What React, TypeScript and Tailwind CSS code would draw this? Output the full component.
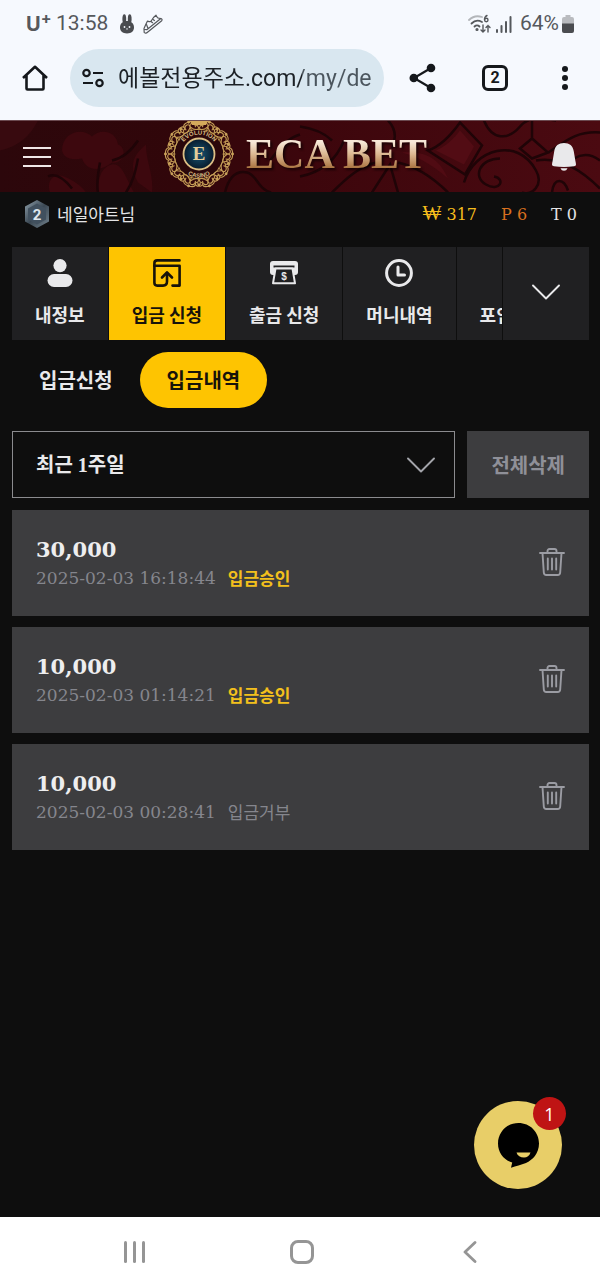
import { useState } from "react";
import type { ReactNode } from "react";

interface Deposit {
  id: number;
  amount: string;
  date: string;
  status: string;
  approved: boolean;
}

const deposits: Deposit[] = [
  { id: 1, amount: "30,000", date: "2025-02-03 16:18:44", status: "입금승인", approved: true },
  { id: 2, amount: "10,000", date: "2025-02-03 01:14:21", status: "입금승인", approved: true },
  { id: 3, amount: "10,000", date: "2025-02-03 00:28:41", status: "입금거부", approved: false },
];

function StatusBar() {
  return (
    <div className="flex h-12 items-center justify-between pl-[26px] pr-[26px] font-['Roboto',sans-serif] text-[21px] text-[#55585c]">
      <div className="flex items-center">
        <span className="flex w-[30px] items-start font-['Inter',sans-serif] text-xl leading-6 font-bold">
          U<sup className="top-0 text-base leading-3">+</sup>
        </span>
        <span>13:58</span>
        <svg className="ml-3 h-5 w-[14px]" viewBox="0 0 14 20" fill="#4a4c50">
          <ellipse cx="4.3" cy="5" rx="1.9" ry="4.8" />
          <ellipse cx="9.7" cy="5" rx="1.9" ry="4.8" />
          <path d="M7 7c4 0 7 2.4 7 6.3S11.500 19.500 7 19.500 0 17.200 0 13.300 3 7 7 7z" />
          <circle cx="4.500" cy="13" r="0.900" fill="#f6f9fe" />
          <circle cx="9.500" cy="13" r="0.900" fill="#f6f9fe" />
          <path d="M6 14.500h2L7 16z" fill="#f6f9fe" />
        </svg>
        <svg className="ml-[9px] h-5 w-5" viewBox="0 0 20 20" fill="none" stroke="#55585c" strokeWidth="1.200" strokeLinejoin="round" strokeLinecap="round">
          <path d="M1.200 18.500L1 14.500 3 10l1.500-3 1.500.6c1 .3 2-.2 2.500-1.100L10.500 3.500 13 1.200l1.500 2.500c1 .6 2.300.8 3.800 1 .9.400 1 1.300.4 2L4.500 18.300c-1 .9-2.800 1-3.300.2z" />
          <path d="M1.500 15.500l2.300.2L17.500 4.800M8 7.500l1.600 1.200M9.800 5.300l1.600 1.200M5 14.500l-1.500-4" />
        </svg>
      </div>
      <div className="flex items-center">
        <svg className="h-5 w-6" viewBox="0 0 24 20" fill="none" stroke="#55585c" strokeWidth="1.800" strokeLinecap="round">
          <path d="M1 6C5 2 9.500 1.500 14 3" stroke="#b3b6ba" />
          <path d="M3.500 9.500c3-3 7-3.500 10.500-1.500M6.500 12.500c1.500-1.500 3.500-1.500 5 0" />
          <circle cx="9" cy="15.500" r="0.700" fill="#55585c" />
          <path d="M19 1.500c-2 1-2.500 2.500-2.500 4" strokeWidth="1.400" />
          <circle cx="18.300" cy="6" r="1.700" strokeWidth="1.400" />
          <path d="M15 11v7m-2-2l2 2 2-2M20 18v-6.500m-2 2l2-2 2 2" strokeWidth="1.400" />
        </svg>
        <svg className="ml-1 h-[18px] w-4" viewBox="0 0 16 18" fill="#55585c">
          <rect x="0" y="14" width="2" height="4" rx="1" />
          <rect x="4.500" y="10" width="2" height="8" rx="1" />
          <rect x="9" y="6" width="2" height="12" rx="1" />
          <rect x="13.500" y="1" width="2" height="17" rx="1" />
        </svg>
        <span className="ml-2">64%</span>
        <svg className="ml-[3px] h-[18px] w-3" viewBox="0 0 12 18">
          <path d="M3.500 0h5v2H10a2 2 0 012 2v5H0V4a2 2 0 012-2h1.500z" fill="#b9bbbf" />
          <path d="M0 8.500h12V16a2 2 0 01-2 2H2a2 2 0 01-2-2z" fill="#4a4c50" />
        </svg>
      </div>
    </div>
  );
}

function BrowserBar() {
  return (
    <div className="flex items-center pt-px pb-[13px] pl-[22px] pr-6 text-[#15181c]">
      <button aria-label="홈">
        <svg className="h-[26px] w-[26px]" viewBox="0 0 26 26" fill="none" stroke="currentColor" strokeWidth="2.600" strokeLinejoin="round">
          <path d="M1 13L13 1.800 25 13M4.500 10.500v13a1 1 0 001 1h15a1 1 0 001-1v-13" />
        </svg>
      </button>
      <div className="ml-[22px] flex h-[58px] min-w-0 flex-1 items-center gap-[14px] rounded-full bg-[#d9e7f0] pl-3 pr-2">
        <svg className="h-5 w-[22px] shrink-0" viewBox="0 0 22 20" fill="none" stroke="currentColor" strokeWidth="2.200">
          <circle cx="4.500" cy="5" r="3.200" />
          <path d="M11 5h10M1 15h10" />
          <circle cx="17.500" cy="15" r="3.200" />
        </svg>
        <input
          aria-label="주소"
          type="text"
          defaultValue="에볼전용주소.com/my/de"
          className="w-full min-w-0 bg-linear-to-r from-[#1c2126] from-[184px] to-[#4b555d] to-[184px] bg-clip-text pt-[2px] font-['Roboto','Noto_Sans_CJK_KR',sans-serif] text-[23px] text-transparent outline-none"
        />
      </div>
      <div className="ml-[25px] flex items-center gap-[46px]">
        <button aria-label="공유">
          <svg className="h-[30px] w-[27px]" viewBox="0 0 27 30" fill="currentColor" stroke="currentColor" strokeWidth="2.200">
            <path d="M22 5L5 15l17 10" fill="none" />
            <circle cx="22" cy="5" r="3.200" />
            <circle cx="4.800" cy="15" r="3.200" />
            <circle cx="22" cy="25" r="3.200" />
          </svg>
        </button>
        <button className="flex h-[26px] w-[26px] items-center justify-center rounded-md border-[3px] border-[#15181c] font-['Roboto',sans-serif] text-base font-bold">
          2
        </button>
        <button aria-label="더보기" className="flex w-[22px] flex-col items-center gap-[3px]">
          <span className="h-[6px] w-[6px] rounded-full bg-[#15181c]" />
          <span className="h-[6px] w-[6px] rounded-full bg-[#15181c]" />
          <span className="h-[6px] w-[6px] rounded-full bg-[#15181c]" />
        </button>
      </div>
    </div>
  );
}

function HeaderPattern() {
  return (
    <svg className="absolute inset-0 h-full w-full" viewBox="0 0 600 72" preserveAspectRatio="xMidYMid slice" aria-hidden="true">
      <defs>
        <linearGradient id="wine" x1="0" x2="1">
          <stop offset="0" stopColor="#2c070b" />
          <stop offset="0.300" stopColor="#31060a" />
          <stop offset="0.500" stopColor="#3c060c" />
          <stop offset="1" stopColor="#4b0a11" />
        </linearGradient>
      </defs>
      <rect width="600" height="72" fill="url(#wine)" />
      <path d="M0 0h38C30 16 18 26 0 30z" fill="#380a0f" />
      <path d="M62 30C62 12 82 6 92 16c8-8 24-6 26 8 10 4 6 20-6 18-12 10-26 8-30-4-10 2-18 0-20-8z" fill="#3d080e" />
      <path d="M50 72c-4-12 4-20 14-16s18 10 22 16zM98 72c0-16 4-26 14-28s14 14 22 28zM138 62c-10-18-4-28 8-38 0 18 8 30 6 48z" fill="#3d080e" />
      <g fill="none" stroke="#1f0407" strokeWidth="2.500">
        <path d="M100 42c-2 12-4 20-2 30M112 40c10-2 18-8 26-20M126 72c8-12 10-24 12-34M48 56c8-4 16 2 24 12M225 72c4-16 12-22 22-20s10 16 24 20M270 40c8-10 16-22 30-26" />
        <path d="M300 56c20-4 36-16 44-36M332 72c16-16 28-26 44-30M372 72l18-28 8 28M398 42c18 4 34 14 50 30M392 28c6-14 2-22-4-28M300 6c14 2 24 6 32 14" />
        <path d="M428 30c12-4 22-14 32-28l22 23-17 29zM520 28l12-10 16 14-16 6zM532 0v18M548 32c14-8 26-22 52-20" />
        <path d="M464 62c10-34 54-46 72-12 8 14-4 26-14 22M500 38c-20 0-28 18-14 26s20-6 8-8M484 0c8 20 24 20 36 6s30-6 36-6M552 72c2-16 12-14 16-2M536 40c22-4 44 8 64 28M574 38c10-6 18-4 26 2" />
      </g>
      <path d="M436 30c10-4 18-12 24-20l14 16-10 18z" fill="#520c14" />
      <path d="M402 32c16 4 30 12 46 26-8-18-20-28-46-26z" fill="#500b13" />
    </svg>
  );
}

function Emblem() {
  const lobes = Array.from({ length: 10 }, (_, i) => i * 36 + 18);
  return (
    <svg className="h-[70px] w-[70px] shrink-0 overflow-visible" viewBox="0 0 70 70" aria-hidden="true">
      <defs>
        <linearGradient id="gold" gradientUnits="userSpaceOnUse" x1="0" y1="0" x2="70" y2="70">
          <stop offset="0" stopColor="#d9b36a" />
          <stop offset="0.500" stopColor="#b58c47" />
          <stop offset="1" stopColor="#d9b36a" />
        </linearGradient>
        <radialGradient id="sea">
          <stop offset="0" stopColor="#175675" />
          <stop offset="1" stopColor="#07192a" />
        </radialGradient>
        <path id="arcTop" d="M15.500 35a19.500 19.500 0 0139 0" />
        <path id="arcBottom" d="M11.500 35a23.500 23.500 0 0047 0" />
      </defs>
      <circle cx="35" cy="35" r="26" fill="#2b070a" />
      <g fill="none" stroke="url(#gold)" strokeWidth="1.100" strokeLinecap="round">
        {lobes.map((a) => (
          <g key={a} transform={`rotate(${a} 35 35)`}>
            <path d="M26.500 10c-3-2-2.500-6 .5-6 2.500 0 3 3 1 3.500M43.500 10c3-2 2.500-6-.5-6-2.500 0-3 3-1 3.500" />
            <path d="M29 4c1-3.500 11-3.500 12 0M30 8c-1.500-4 4-6 5-2.500 1-3.500 6.500-1.500 5 2.500" />
            <path d="M27 11c4 1 6-1.500 8-4.500 2 3 4 5.500 8 4.500M35 5v6" />
            <circle cx="35" cy="1.500" r="0.900" fill="#d9b36a" />
            <circle cx="25.500" cy="6" r="0.600" />
          </g>
        ))}
        <circle cx="35" cy="35" r="24.800" strokeWidth="1" />
      </g>
      <path d="M28 6l-3-7 5.500 3L35-4l4.500 6 5.500-3-3 7z" fill="#d4aa5c" />
      <g fill="#d9bd84" fontFamily="Liberation Sans, sans-serif" fontSize="6" fontWeight="bold">
        <text textAnchor="middle">
          <textPath href="#arcTop" startOffset="50%">EVOLUTION</textPath>
        </text>
        <text textAnchor="middle">
          <textPath href="#arcBottom" startOffset="50%">CASINO</textPath>
        </text>
      </g>
      <circle cx="35" cy="35" r="15.500" fill="url(#sea)" stroke="#dcbf85" strokeWidth="1.800" />
      <text x="35" y="41" textAnchor="middle" fontFamily="Liberation Serif, serif" fontSize="19" fontWeight="bold" fill="#e3cd98">
        E
      </text>
    </svg>
  );
}

function Header() {
  return (
    <header className="relative flex h-[72px] items-center overflow-hidden border-t border-[#6b4a50] pl-[23px] pr-6">
      <HeaderPattern />
      <div className="relative flex flex-1">
        <button aria-label="메뉴" className="flex w-7 flex-col gap-[7px]">
          <span className="h-[2px] bg-[#efe6e6]" />
          <span className="h-[2px] bg-[#efe6e6]" />
          <span className="h-[2px] bg-[#efe6e6]" />
        </button>
      </div>
      <a href="#" className="relative flex items-center gap-3 pb-[6px] pr-2">
        <Emblem />
        <span className="bg-linear-to-b from-[#f7e8d8] from-25% via-[#dcb993] to-[#a9733f] to-80% bg-clip-text font-['Liberation_Serif',serif] text-[42px] leading-[48px] font-bold text-transparent drop-shadow-[2px_2px_1px_rgba(0,0,0,0.6)]">
          ECA BET
        </span>
      </a>
      <div className="relative flex flex-1 justify-end">
        <button aria-label="알림">
          <svg className="h-7 w-6" viewBox="0 0 24 28" fill="#e9e9eb">
            <path d="M12 0c5.500 0 9 2.800 9.800 8.500l1.600 9.500c.2 1.200.6 2.500.6 3.500 0 1.200-1 1.600-2 1.800-6.500.9-13.500.9-20 0-1-.2-2-.6-2-1.800 0-1 .4-2.300.6-3.500L2.200 8.500C3 2.800 6.500 0 12 0z" />
            <path d="M8.500 25.300h7c-.5 1.700-2 2.500-3.500 2.500s-3-.8-3.500-2.500z" />
          </svg>
        </button>
      </div>
    </header>
  );
}

function UserBar() {
  return (
    <div className="flex h-[43px] items-center justify-between pl-[25px] pr-[23px]">
      <div className="flex items-center gap-2">
        <svg className="h-7 w-6" viewBox="0 0 24 28">
          <defs>
            <linearGradient id="steel" x1="0" y1="0" x2="1" y2="1">
              <stop offset="0" stopColor="#8fa0ac" />
              <stop offset="0.500" stopColor="#3b4853" />
              <stop offset="1" stopColor="#74848f" />
            </linearGradient>
          </defs>
          <path d="M12 0l12 6.500v15L12 28 0 21.500v-15z" fill="url(#steel)" />
          <path d="M12 3.500l9 5v11l-9 5-9-5v-11z" fill="#41505e" />
          <text x="12" y="19.500" textAnchor="middle" fontFamily="Roboto, sans-serif" fontSize="15" fontWeight="bold" fill="#dfe8ef">
            2
          </text>
        </svg>
        <span className="text-[17px] text-[#e4e4e6]">네일아트님</span>
      </div>
      <div className="flex items-baseline gap-6 font-['DejaVu_Serif','Noto_Sans_CJK_KR',serif] text-base leading-6">
        <span className="text-[#f5bd1c]">
          <span className="font-['Liberation_Serif',serif] text-xl leading-6">₩</span> 317
        </span>
        <span className="text-[#d9701f]">P 6</span>
        <span className="text-[#e4e4e6]">T 0</span>
      </div>
    </div>
  );
}

const tabs: { label: string; icon: ReactNode }[] = [
  {
    label: "내정보",
    icon: (
      <svg className="h-7 w-7" viewBox="0 0 28 28" fill="currentColor">
        <circle cx="14" cy="6.600" r="6.600" />
        <rect x="1.500" y="15" width="25" height="13" rx="6.500" />
      </svg>
    ),
  },
  {
    label: "입금 신청",
    icon: (
      <svg className="h-7 w-7" viewBox="0 0 28 28" fill="none" stroke="currentColor" strokeWidth="2.600" strokeLinecap="round" strokeLinejoin="round">
        <path d="M26.500 1.400H4.200a2.800 2.800 0 00-2.800 2.800v19.600c0 1.500 1 2.800 2.800 2.800H10c2.600 0 4-1.300 4-4V14" />
        <path d="M1.400 6.800h25.200v19.800H19.500M9 18.500l5-5 5 5" />
      </svg>
    ),
  },
  {
    label: "출금 신청",
    icon: (
      <svg className="h-7 w-7" viewBox="0 0 28 28">
        <path d="M3 2h22a3 3 0 013 3v8a3 3 0 01-3 3H3a3 3 0 01-3-3V5a3 3 0 013-3z" fill="currentColor" />
        <path d="M3.500 7.500h21" stroke="#202022" strokeWidth="2" />
        <path d="M5.500 9.500h17l2.500 14.800H3z" fill="#202022" stroke="currentColor" strokeWidth="2" strokeLinejoin="round" />
        <text x="14" y="20.500" textAnchor="middle" fontFamily="Liberation Sans, sans-serif" fontSize="10" fontWeight="bold" fill="currentColor">
          $
        </text>
      </svg>
    ),
  },
  {
    label: "머니내역",
    icon: (
      <svg className="h-7 w-7" viewBox="0 0 28 28" fill="none" stroke="currentColor" strokeWidth="3" strokeLinecap="round" strokeLinejoin="round">
        <circle cx="14" cy="14" r="12.400" />
        <path d="M13 8v8h6.500" />
      </svg>
    ),
  },
  {
    label: "포인트내역",
    icon: (
      <svg className="h-7 w-7" viewBox="0 0 28 28" fill="none" stroke="currentColor" strokeWidth="3">
        <circle cx="14" cy="14" r="12.400" />
      </svg>
    ),
  },
];

function ChevronDown() {
  return (
    <svg className="h-4 w-7" viewBox="0 0 28 16" fill="none" stroke="currentColor" strokeWidth="1.900" strokeLinecap="round" strokeLinejoin="round">
      <path d="M1 1.500l13 13 13-13" />
    </svg>
  );
}

function TabMenu() {
  const [active, setActive] = useState(1);

  return (
    <nav className="flex">
      <div className="flex min-w-0 flex-1 gap-px overflow-hidden">
        {tabs.map((tab, i) => (
          <button
            key={tab.label}
            onClick={() => setActive(i)}
            className={`flex shrink-0 flex-col items-center gap-[15px] px-[23px] pt-3 pb-[14px] text-lg leading-6 font-bold ${
              active === i ? "bg-[#fec401] text-[#17130a]" : "bg-[#202022] text-[#e9e9eb]"
            }`}
          >
            {tab.icon}
            {tab.label}
          </button>
        ))}
      </div>
      <button aria-label="메뉴 펼치기" className="ml-px flex w-[86px] items-center justify-center bg-[#202022] pb-1 text-[#e9e9eb]">
        <ChevronDown />
      </button>
    </nav>
  );
}

function DepositRow({ deposit }: { deposit: Deposit }) {
  return (
    <li className="flex items-start justify-between bg-[#3d3d3f] px-6 pt-[26px] pb-6">
      <div>
        <p className="font-['DejaVu_Serif',serif] text-[21px] leading-7 font-bold text-[#eeeeef]">{deposit.amount}</p>
        <p className="flex gap-3 text-[17px] leading-7 text-[#85868d]">
          <span className="font-['DejaVu_Serif',serif]">{deposit.date}</span>
          <span className={deposit.approved ? "font-bold text-[#f3c01c]" : ""}>{deposit.status}</span>
        </p>
      </div>
      <button aria-label="삭제" className="pt-3 text-[#9b9ca3]">
        <svg className="h-7 w-[26px]" viewBox="0 0 26 28" fill="none" stroke="currentColor" strokeWidth="1.900" strokeLinecap="round" strokeLinejoin="round">
          <path d="M1 5h24M8.500 5V3c0-1.200.8-2 2-2h5c1.200 0 2 .8 2 2v2M3.500 5l1.300 19.500c.1 1.500 1 2.500 2.500 2.500h11.400c1.500 0 2.400-1 2.500-2.500L22.500 5M8.800 10.500v11M13 10.500v11M17.200 10.500v11" />
        </svg>
      </button>
    </li>
  );
}

function ChatButton() {
  return (
    <button aria-label="채팅 상담" className="absolute right-[38px] bottom-7 flex h-[88px] w-[88px] items-center justify-center rounded-full bg-[#e8ce68]">
      <svg className="h-[45px] w-[41px]" viewBox="0 0 41 45">
        <path d="M20.500 0C32 0 41 9 41 20.500c0 10-6.500 16.500-13 19.500-5 2-10 3-15 4.700l1.200-5.200C6 37 0 30 0 20.500 0 9 9 0 20.500 0z" fill="#000" />
        <path d="M18.500 29.500h14c-1 3.400-3.500 5-6.500 5-3.600 0-6.500-1.600-7.500-5z" fill="#e8ce68" />
      </svg>
      <span className="absolute -top-1 -right-1 flex h-[33px] w-[33px] items-center justify-center rounded-full bg-[#bf1414] font-['Open_Sans',sans-serif] text-lg text-white">
        1
      </span>
    </button>
  );
}

function SystemNav() {
  return (
    <div className="flex h-[70px] items-center bg-white pr-[46px] pl-[50px] text-[#959595]">
      <button aria-label="최근 앱" className="flex flex-1 justify-center gap-[6px]">
        <span className="h-[22px] w-[3px] rounded-full bg-[#959595]" />
        <span className="h-[22px] w-[3px] rounded-full bg-[#959595]" />
        <span className="h-[22px] w-[3px] rounded-full bg-[#959595]" />
      </button>
      <button aria-label="홈 화면" className="flex flex-1 justify-center">
        <span className="h-6 w-6 rounded-lg border-[3px] border-[#959595]" />
      </button>
      <button aria-label="뒤로" className="flex flex-1 justify-center">
        <svg className="h-[22px] w-[14px]" viewBox="0 0 14 22" fill="none" stroke="currentColor" strokeWidth="2.800" strokeLinecap="round" strokeLinejoin="round">
          <path d="M12 1.500L2 11l10 9.500" />
        </svg>
      </button>
    </div>
  );
}

export default function App() {
  const [period, setPeriod] = useState("week");

  return (
    <div className="flex min-h-screen flex-col bg-[#0e0e0e] font-['Noto_Sans_CJK_KR',sans-serif]">
      <div className="bg-[#f6f9fe]">
        <StatusBar />
        <BrowserBar />
      </div>
      <Header />
      <UserBar />

      <main className="relative flex-1 pt-3 pr-[11px] pl-3">
        <TabMenu />

        <div className="mt-3 flex text-xl font-bold">
          <button className="h-14 rounded-full px-[27px] text-[#e9e9eb]">입금신청</button>
          <button className="h-14 rounded-full bg-[#fec401] px-[27px] text-[#17130a]">입금내역</button>
        </div>

        <div className="mt-[23px] flex gap-3">
          <div className="relative flex-1">
            <select
              aria-label="조회 기간"
              value={period}
              onChange={(e) => setPeriod(e.target.value)}
              className="h-[67px] w-full appearance-none border border-[#8b8b8e] bg-[#0e0e0e] px-[23px] font-['Liberation_Serif','Noto_Sans_CJK_KR',serif] text-xl font-bold text-[#e9e9eb]"
            >
              <option value="week">최근 1주일</option>
              <option value="month">최근 1개월</option>
            </select>
            <span className="pointer-events-none absolute inset-y-0 right-5 flex items-center text-[#a3a4aa]">
              <ChevronDown />
            </span>
          </div>
          <button className="bg-[#3d3d3f] px-6 text-xl font-bold text-[#8f9098]">전체삭제</button>
        </div>

        <ul className="mt-3 flex flex-col gap-[11px]">
          {deposits.map((deposit) => (
            <DepositRow key={deposit.id} deposit={deposit} />
          ))}
        </ul>

        <ChatButton />
      </main>

      <SystemNav />
    </div>
  );
}
